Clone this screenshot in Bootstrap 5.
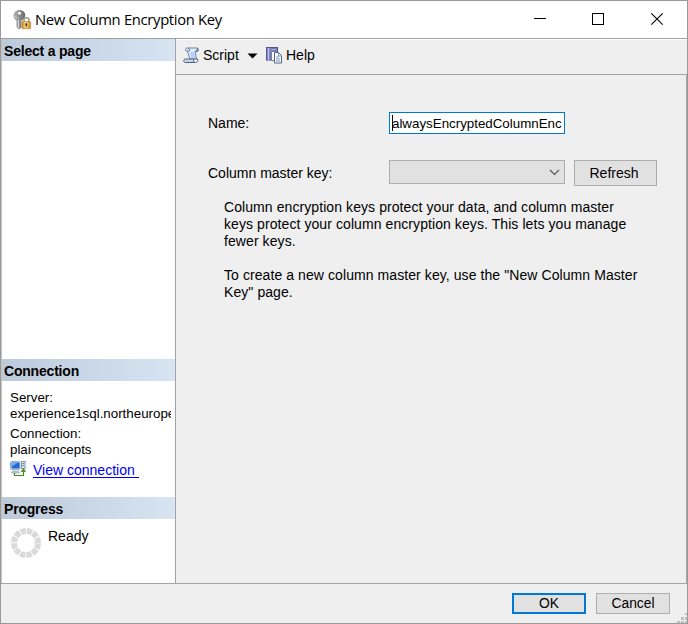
<!DOCTYPE html>
<html lang="en">
<head>
<meta charset="utf-8">
<title>New Column Encryption Key</title>
<link href="https://cdn.jsdelivr.net/npm/bootstrap@5.3.0/dist/css/bootstrap.min.css" rel="stylesheet">
<style>
body{font-family:"Liberation Sans",Arial,sans-serif;font-size:14px;line-height:17px;color:#000;background:#efefef;overflow:hidden}
.window{width:688px;height:624px;border:1px solid #999}
.titlebar{height:38px;border-bottom:1px solid #a0a0a0;padding-left:11px;padding-right:1px}
.caption{font-family:"Open Sans",sans-serif;font-size:14.8px;line-height:20px;margin-left:3px;letter-spacing:-.32px;margin-top:-1px}
.winbtn{width:58px;height:37px}
.workspace{height:545px;border-bottom:1px solid #a5a5a5}
.sidebar{width:175px;border-right:1px solid #a0a0a5;border-left:1px solid #c4c4c4}
.section-title{height:22px;font-size:14px;line-height:24px;padding-left:2px;font-weight:700;background:linear-gradient(90deg,#bccada,#d7e4f2);letter-spacing:-.2px}
.pages{height:320px}
.conn{height:138px}
.conn-info{padding:9px 4px 0 8px;font-size:13.33px;line-height:16px;white-space:nowrap}
.conn-info .clip{overflow:hidden}
.viewlink{color:#0000f0;font-size:14px;line-height:17px;height:16px;border-bottom:1px solid #0000f0;width:106px;margin-left:7px;text-decoration:none;white-space:nowrap;margin-top:1px}
.link-row{margin-top:3px}
.ready{margin-left:6px;margin-top:1px}
.toolbar{height:36px;border-top:1px solid #fff;border-bottom:1px solid #a5a5a5;padding:0 0 3px 7px}
.script-label{width:37px;margin-left:3px}
.help-label{margin-left:3px}
.drop-arrow{margin:0 8px 0 7px}
.form-area{padding:37px 0 0 32px;border-right:1px solid #a5a5a5}
.form-label-cell{width:181px}
.namebox{width:176px;height:22px;border:1px solid #0078d7;padding:0 2px;font-size:13.33px;line-height:21px;overflow:hidden;white-space:nowrap}
.caret{width:1px;height:16px;background:#000;margin:2px -1px 0 0}
.key-row{padding-top:26px}
.master-label{padding-top:5px}
.combo{width:176px;height:24px;background:#e1e1e1;border:1px solid #adadad;padding-right:4px}
.push{background:#e1e1e1;border:1px solid #adadad;border-radius:0;color:#000;font-size:13.8px;line-height:17px;padding:0}
.refresh{width:83px;height:26px;margin-left:9px;font-size:14px;padding-right:3px}
.dlg{width:74px;height:21px}
.push.default-action{border:2px solid #0078d7}
.help-text{padding:13px 0 0 16px;white-space:nowrap;letter-spacing:.08px}
.second-note{margin-top:17px}
.footer{height:39px;padding:9px 17px 0 0;gap:10px}
.grip{right:0;bottom:0}
</style>
<script src="https://cdn.jsdelivr.net/npm/bootstrap@5.3.0/dist/js/bootstrap.bundle.min.js"></script>
</head>
<body>
<div class="window d-flex flex-column position-relative">
  <header class="titlebar bg-white d-flex align-items-center flex-shrink-0">
    <svg width="20" height="22" viewBox="0 0 20 22">
      <defs><linearGradient id="steel"><stop stop-color="#b5b5b5"/><stop offset=".5" stop-color="#8e8e8e"/><stop offset="1" stop-color="#686868"/></linearGradient>
      <linearGradient id="gold"><stop stop-color="#c98e28"/><stop offset=".45" stop-color="#f6d77d"/><stop offset="1" stop-color="#c58a2a"/></linearGradient></defs>
      <path d="M7.500 1C4 1 1.500 3.500 1.500 6.500c0 2.500 1.200 4 3 5V18l2.500 2.500 2.500-2v-7c2.300-.8 3.800-2.800 3.800-5.300C13.300 3.300 11 1 7.500 1z" fill="url(#steel)"/>
      <circle cx="7.500" cy="4.200" r="1.600" fill="#eee"/><path d="M6.500 11v8" stroke="#d7d7d7"/><path d="M3.300 7c1 2 2 2.400 3 2.600" stroke="#ccc" fill="none"/>
      <path d="M12 13v-2c0-3 5-3 5 0v2" fill="none" stroke="#9a9a90" stroke-width="1.500"/>
      <rect x="10" y="12.500" width="8.600" height="7.200" rx=".6" fill="url(#gold)" stroke="#b78335" stroke-width=".7"/><circle cx="14.300" cy="15.300" r="1" fill="#4b3510"/><path d="M14.300 15.300v2.500" stroke="#4b3510"/>
    </svg>
    <span class="caption">New Column Encryption Key</span>
    <div class="ms-auto d-flex">
      <svg class="winbtn" viewBox="0 0 58 37"><path d="M22 17.500h12" stroke="#000"/></svg>
      <svg class="winbtn" viewBox="0 0 58 37"><rect x="22.500" y="12.500" width="11" height="11" fill="none" stroke="#000"/></svg>
      <svg class="winbtn" viewBox="0 0 58 37"><path d="M23.300 12.300l11.400 11.400M34.700 12.300L23.300 23.700" stroke="#000" stroke-width="1.100"/></svg>
    </div>
  </header>

  <div class="workspace d-flex flex-shrink-0">
    <aside class="sidebar bg-white flex-shrink-0">
      <section class="pages"><div class="section-title">Select a page</div></section>
      <section class="conn">
        <div class="section-title">Connection</div>
        <div class="conn-info">
          <div>Server:</div>
          <div class="clip">experience1sql.northeurope</div>
          <div class="mt-1">Connection:</div>
          <div>plainconcepts</div>
          <div class="d-flex link-row">
            <svg width="16" height="16" viewBox="0 0 16 16">
              <rect x=".5" y=".5" width="9.500" height="8" rx="1" fill="#d8e3f2" stroke="#9daec8"/><rect x="1.500" y="1.500" width="8" height="6" fill="#2368ce"/><path d="M1.500 1.500h6.500L1.500 6z" fill="#6faaf2"/>
              <path d="M2.500 10h6l1 2h-8z" fill="#c5cedc" stroke="#8796b0" stroke-width=".6"/>
              <rect x="11.500" y=".5" width="3.500" height="7" fill="#dce1e9" stroke="#8995ab"/><path d="M12.500 2.500h1.500M12.500 4.500h1.500" stroke="#6e7f9d"/>
              <path d="M4.500 12v2.500h9V9" fill="none" stroke="#3d8d20" stroke-width="1.200"/><path d="M10.500 11L13.500 7 16 11z" fill="#45961f"/>
            </svg>
            <a class="viewlink" href="#">View connection</a>
          </div>
        </div>
      </section>
      <section>
        <div class="section-title">Progress</div>
        <div class="d-flex px-2 pt-2">
          <svg width="32" height="32" viewBox="0 0 32 32"><circle cx="16" cy="16" r="12" fill="none" stroke="#dadada" stroke-width="6" stroke-dasharray="5.280 1.003" stroke-dashoffset="-.5"/></svg>
          <span class="ready">Ready</span>
        </div>
      </section>
    </aside>

    <main class="flex-grow-1 d-flex flex-column">
      <div class="toolbar d-flex align-items-center">
        <svg width="17" height="17" viewBox="0 0 17 17">
          <path d="M4 1h9.500c2.500 0 2.500 3.500 0 3.500h-1.500l1.500 7.500H7L4.500 4.500C2 4.500 2 1 4 1z" fill="#e4efff" stroke="#6b7fa6"/>
          <path d="M5 1.500c1.500 0 2 1 1.500 2.500H4" fill="none" stroke="#6b7fa6"/><path d="M12 4.500h2c1.500-.5 1.500-3 0-3.500" fill="#8ea5cc" stroke="#596f99"/>
          <path d="M7 6h4M7.500 8h4M8 10h4" stroke="#8aaee2"/>
          <path d="M2.500 12h8.500c-1 1.500 0 3.500 1.500 3.500H2.500c-2.300 0-2.300-3.500 0-3.500z" fill="#c6d4eb" stroke="#4f5f80"/><path d="M11 12h3.500c1 1.500 0 3.500-2 3.500" fill="#f4f8ff" stroke="#4f5f80"/>
        </svg>
        <span class="script-label">Script</span>
        <svg class="drop-arrow" width="11" height="6" viewBox="0 0 11 6"><path d="M.5 .5h10L5.500 5.500z" fill="#000"/></svg>
        <svg width="17" height="17" viewBox="0 0 17 17">
          <rect x=".5" y=".5" width="11" height="12.500" fill="#7779b8" stroke="#53558f"/><path d="M2.500 1v12" stroke="#bfc0e5" stroke-width="1.500"/><path d="M5 2.500h5" stroke="#a9abd9"/>
          <path d="M5.500 4.500h4l2 2v7h-6z" fill="#f4f7fd" stroke="#7182a3"/>
          <path d="M8.500 5.500h4l3 3v7.500h-7z" fill="#fff" stroke="#53658b"/><path d="M12.500 5.500V9H16M10 10h3M10 12h4M10 14h4" fill="none" stroke="#7890b8"/>
        </svg>
        <span class="help-label">Help</span>
      </div>
      <div class="form-area flex-grow-1">
        <div class="d-flex align-items-center">
          <label class="form-label-cell">Name:</label>
          <div class="namebox bg-white d-flex"><span class="caret flex-shrink-0"></span><span>alwaysEncryptedColumnEnc</span></div>
        </div>
        <div class="key-row d-flex">
          <label class="form-label-cell master-label">Column master key:</label>
          <div class="combo d-flex align-items-center justify-content-end"><svg width="11" height="7" viewBox="0 0 11 7"><path d="M1 1l4.500 4.500L10 1" fill="none" stroke="#555" stroke-width="1.100"/></svg></div>
          <button class="btn push refresh">Refresh</button>
        </div>
        <div class="help-text">
          <div>Column encryption keys protect your data, and column master<br>keys protect your column encryption keys. This lets you manage<br>fewer keys.</div>
          <div class="second-note">To create a new column master key, use the "New Column Master<br>Key" page.</div>
        </div>
      </div>
    </main>
  </div>

  <footer class="footer d-flex justify-content-end">
    <button class="btn push dlg default-action">OK</button>
    <button class="btn push dlg">Cancel</button>
  </footer>
  <svg class="grip position-absolute" width="10" height="10" viewBox="0 0 10 10"><path d="M8 0h2v2H8zM4 4h3v3H4zM8 4h2v3H8zM0 8h3v2H0zM4 8h3v2H4zM8 8h2v2H8z" fill="#bfbfbf"/></svg>
</div>
</body>
</html>
